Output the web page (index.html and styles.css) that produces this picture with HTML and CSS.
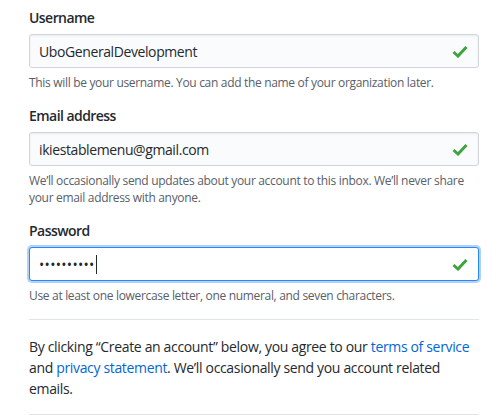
FILE: index.html
```html
<!DOCTYPE html>
<html>
<head>
<meta charset="utf-8">
<link rel="stylesheet" href="styles.css">
</head>
<body>
<div class="form">
  <div class="group">
    <div class="label">Username</div>
    <div class="input">
      <span class="value">UboGeneralDevelopment</span>
      <svg class="check" viewBox="0 0 16 13" width="16" height="13"><polyline points="1.5,7 6,11 14.5,2" fill="none" stroke="#3fa33f" stroke-width="3"/></svg>
    </div>
    <p class="note">This will be your username. You can add the name of your organization later.</p>
  </div>
  <div class="group">
    <div class="label">Email address</div>
    <div class="input">
      <span class="value">ikiestablemenu@gmail.com</span>
      <svg class="check" viewBox="0 0 16 13" width="16" height="13"><polyline points="1.5,7 6,11 14.5,2" fill="none" stroke="#3fa33f" stroke-width="3"/></svg>
    </div>
    <p class="note">We’ll occasionally send updates about your account to this inbox. We’ll never share your email address with anyone.</p>
  </div>
  <div class="group">
    <div class="label">Password</div>
    <div class="input focused">
      <span class="value dots">••••••••••</span><span class="caret"></span>
      <svg class="check" viewBox="0 0 16 13" width="16" height="13"><polyline points="1.5,7 6,11 14.5,2" fill="none" stroke="#3fa33f" stroke-width="3"/></svg>
    </div>
    <p class="note">Use at least one lowercase letter, one numeral, and seven characters.</p>
  </div>
  <div class="terms">
    <p>By clicking “Create an account” below, you agree to our <a href="#">terms of service</a> and <a href="#">privacy statement</a>. We’ll occasionally send you account related emails.</p>
  </div>
</div>
</body>
</html>
```
FILE: styles.css
```css
html, body {
  margin: 0;
  padding: 0;
  background: #fff;
}
body {
  font-family: "Open Sans", "Liberation Sans", sans-serif;
  color: #24292e;
}
.form {
  width: 450px;
  padding: 8px 0 0 29px;
}
.group {
  margin-bottom: 15px;
}
.label {
  font-size: 14px;
  font-weight: 600;
  line-height: 20px;
  margin-bottom: 6px;
  letter-spacing: -0.55px;
}
.input {
  box-sizing: border-box;
  height: 34px;
  border: 1px solid #d1d5da;
  border-radius: 3px;
  background: #fafbfc;
  display: flex;
  align-items: center;
  padding: 0 10px 0 9px;
  font-size: 14px;
  letter-spacing: -0.4px;
  box-shadow: inset 0 1px 2px rgba(27,31,35,0.075);
}
.input.focused {
  background: #fff;
  border-color: #2188ff;
  box-shadow: 0 0 0 2px rgba(3,102,214,0.3);
}
.value {
  flex: none;
}
.dots {
  font-size: 14px;
  letter-spacing: 0.3px;
}
.caret {
  width: 1px;
  height: 19px;
  background: #24292e;
  margin-left: 1px;
}
.check {
  margin-left: auto;
}
.note {
  margin: 6px 0 0;
  font-size: 12px;
  line-height: 17px;
  color: #586069;
  letter-spacing: -0.32px;
}
.terms {
  border-top: 1px solid #e1e4e8;
  border-bottom: 1px solid #e1e4e8;
  margin-top: 14px;
  padding: 16px 0 15px;
}
.terms p {
  margin: 0;
  font-size: 14px;
  line-height: 21px;
  letter-spacing: -0.34px;
}
.terms a {
  color: #0366d6;
  text-decoration: none;
}
```
